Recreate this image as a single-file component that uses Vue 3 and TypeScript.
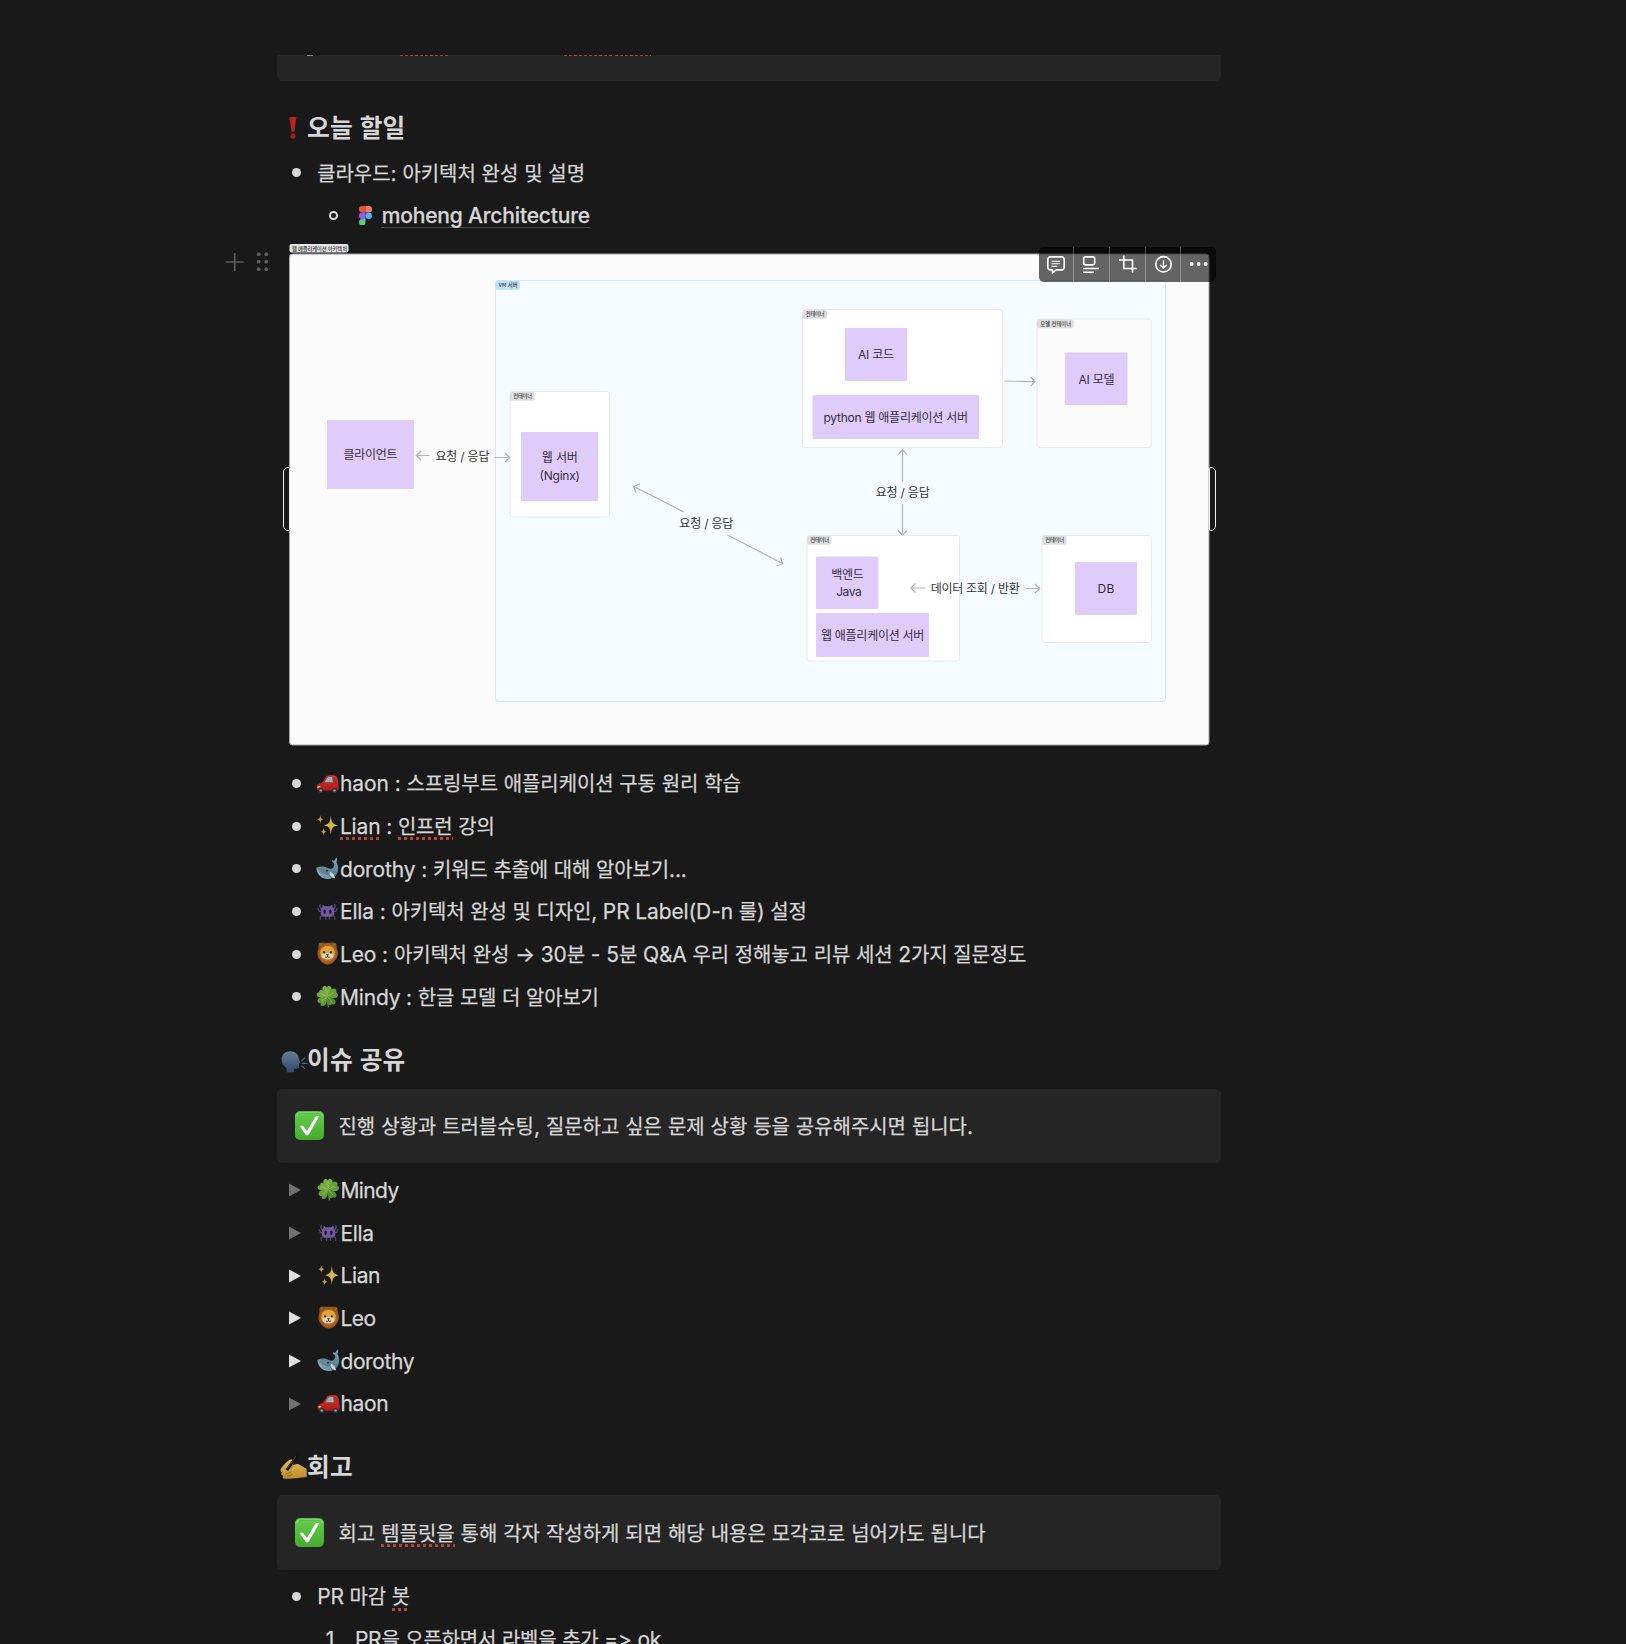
<script setup lang="ts">
import type { Directive } from 'vue'

interface Seg { t: string; k: boolean }
interface Part { t: string; bad?: boolean }
interface Line { icon: string; w: number; parts: Part[] }
interface Toggle { icon: string; name: string; w: number; filled: boolean }
interface Box { x: number; y: number; w: number; h: number }
interface Frame extends Box { label: string; tw: number; fill: string; stroke: string; tag: string }
interface Label { x: number; y: number; w: number; t: string }

// Splits a string in Hangul and Latin runs, which are set in different faces
function segs(text: string): Seg[] {
  return (text.match(/[\uAC00-\uD7A3]+|[^\uAC00-\uD7A3]+/g) ?? []).map(t => ({
    t,
    k: /[\uAC00-\uD7A3]/.test(t),
  }))
}

// Tracks a line of text so that it takes the given measure
const vFit: Directive<HTMLElement, number> = {
  mounted(el, { value }) {
    const natural = el.getBoundingClientRect().width
    const count = (el.textContent ?? '').length
    el.style.letterSpacing = `${(value - natural) / count}px`
  },
}

const todo: Line[] = [
  { icon: 'car', w: 401.5, parts: [{ t: 'haon : 스프링부트 애플리케이션 구동 원리 학습' }] },
  { icon: 'sparkles', w: 155.5, parts: [{ t: 'Lian', bad: true }, { t: ' : ' }, { t: '인프런', bad: true }, { t: ' 강의' }] },
  { icon: 'whale', w: 347.5, parts: [{ t: 'dorothy : 키워드 추출에 대해 알아보기...' }] },
  { icon: 'alien', w: 467.5, parts: [{ t: 'Ella : 아키텍처 완성 및 디자인, PR Label(D-n 룰) 설정' }] },
  { icon: 'lion', w: 687, parts: [{ t: 'Leo : 아키텍처 완성 → 30분 - 5분 Q&A 우리 정해놓고 리뷰 세션 2가지 질문정도' }] },
  { icon: 'clover', w: 259.5, parts: [{ t: 'Mindy : 한글 모델 더 알아보기' }] },
]

const toggles: Toggle[] = [
  { icon: 'clover', name: 'Mindy', w: 59, filled: false },
  { icon: 'alien', name: 'Ella', w: 34, filled: false },
  { icon: 'sparkles', name: 'Lian', w: 40.5, filled: true },
  { icon: 'lion', name: 'Leo', w: 36, filled: true },
  { icon: 'whale', name: 'dorothy', w: 74.5, filled: true },
  { icon: 'car', name: 'haon', w: 48.5, filled: false },
]

const frames: Frame[] = [
  { x: 495.5, y: 280.5, w: 670, h: 421, label: 'VM 서버', tw: 19, fill: '#f5fbff', stroke: '#d3e8f8', tag: '#bfdffa' },
  { x: 510, y: 391.5, w: 99.5, h: 125.5, label: '컨테이너', tw: 19, fill: '#ffffff', stroke: '#e9ebec', tag: '#dedede' },
  { x: 802.5, y: 309.5, w: 200, h: 138, label: '컨테이너', tw: 19, fill: '#ffffff', stroke: '#e9ebec', tag: '#dedede' },
  { x: 1037, y: 319, w: 114.3, h: 128.5, label: '모델 컨테이너', tw: 31, fill: '#fbfbfb', stroke: '#e9ebec', tag: '#dedede' },
  { x: 807, y: 535.5, w: 152.5, h: 125.5, label: '컨테이너', tw: 19, fill: '#ffffff', stroke: '#e9ebec', tag: '#dedede' },
  { x: 1042, y: 535.5, w: 109.3, h: 107, label: '컨테이너', tw: 19, fill: '#ffffff', stroke: '#e9ebec', tag: '#dedede' },
]

const nodes: Box[] = [
  { x: 327, y: 420, w: 87, h: 69 },
  { x: 521, y: 432, w: 77, h: 69 },
  { x: 845, y: 328, w: 62, h: 53 },
  { x: 812.5, y: 395, w: 166.5, h: 44 },
  { x: 1065, y: 352.5, w: 62.5, h: 52.5 },
  { x: 816, y: 556.5, w: 62.5, h: 52.5 },
  { x: 816, y: 613, w: 113, h: 44 },
  { x: 1075, y: 562, w: 62, h: 53 },
]

const labels: Label[] = [
  { x: 343.5, y: 458.8, w: 54, t: '클라이언트' },
  { x: 541.8, y: 461.8, w: 36, t: '웹 서버' },
  { x: 539.5, y: 480.2, w: 40.5, t: '(Nginx)' },
  { x: 858, y: 359.2, w: 36, t: 'AI 코드' },
  { x: 823.5, y: 421.5, w: 144.5, t: 'python 웹 애플리케이션 서버' },
  { x: 1078.5, y: 383.5, w: 36, t: 'AI 모델' },
  { x: 831.2, y: 578.5, w: 32.5, t: '백엔드' },
  { x: 836.2, y: 596.3, w: 25.5, t: 'Java' },
  { x: 821, y: 639.8, w: 103.3, t: '웹 애플리케이션 서버' },
  { x: 1097.5, y: 593.2, w: 16.8, t: 'DB' },
]

const links: Label[] = [
  { x: 435.5, y: 460.8, w: 54, t: '요청 / 응답' },
  { x: 679.3, y: 528, w: 54, t: '요청 / 응답' },
  { x: 875.7, y: 497.3, w: 54, t: '요청 / 응답' },
  { x: 930.7, y: 592.8, w: 89, t: '데이터 조회 / 반환' },
]
</script>

<template>
  <svg class="defs" aria-hidden="true">
    <defs>
      <linearGradient id="gRed" x1="0" y1="0" x2="0" y2="1"><stop offset="0" stop-color="#d9352c" /><stop offset="1" stop-color="#a81b17" /></linearGradient>
      <linearGradient id="gWhale" x1="0" y1="0" x2="0" y2="1"><stop offset="0" stop-color="#7fa6b8" /><stop offset="1" stop-color="#4d7386" /></linearGradient>
      <linearGradient id="gHead" x1="0" y1="0" x2="0" y2="1"><stop offset="0" stop-color="#647d98" /><stop offset="1" stop-color="#2f4a6c" /></linearGradient>
      <linearGradient id="gHand" x1="0" y1="0" x2="0" y2="1"><stop offset="0" stop-color="#e3bb5a" /><stop offset="1" stop-color="#bf8b2a" /></linearGradient>
      <linearGradient id="gCheck" x1="0" y1="0" x2="0" y2="1"><stop offset="0" stop-color="#46a63a" /><stop offset=".12" stop-color="#62cb4b" /><stop offset="1" stop-color="#46ab2c" /></linearGradient>
      <radialGradient id="gMane"><stop offset=".4" stop-color="#d08427" /><stop offset="1" stop-color="#944a14" /></radialGradient>
    </defs>
    <symbol id="car" viewBox="0 0 24 24">
      <path d="M.5 16c0-2.700 2-4 5.500-4.600L9.500 6.500C10.500 4.300 12 3.500 15 3.500h3c3 0 4.300 1.500 4.800 5l1 6c.3 3-.3 4.500-1.800 5H3c-1.500 0-2.500-1-2.500-3.500z" fill="url(#gRed)" />
      <path d="M9 10.700l2.500-4.200c.6-.9 1.500-1.300 3-1.300h2.300l.7 5.500z" fill="#87b8c4" /><path d="M18.600 5.300c1.200.3 1.800 1.500 2.400 5.200h-1.900z" fill="#a42a24" />
      <path d="M1.500 15.200l2.800-.8.300 1.300-2.900 1z" fill="#f2d9a0" />
      <circle cx="5" cy="19.300" r="2.700" fill="#2b2d30" /><circle cx="5" cy="19.300" r="1.400" fill="#8e969c" />
      <circle cx="19.300" cy="19.300" r="2.700" fill="#2b2d30" /><circle cx="19.300" cy="19.300" r="1.400" fill="#8e969c" />
    </symbol>
    <symbol id="sparkles" viewBox="0 0 24 24">
      <path d="M15.500 1.500c.5 6.700 1.600 9.300 7.500 10.200-5.900.9-7 3.600-7.500 10.300-.5-6.700-1.600-9.400-7.500-10.300C13.900 10.800 15 8.200 15.500 1.500z" fill="#d5b54d" />
      <path d="M4.500 1c.3 2.900.9 3.900 3.300 4.400-2.400.5-3 1.500-3.300 4.400C4.200 6.900 3.600 5.900 1.200 5.400 3.600 4.900 4.200 3.900 4.500 1zM8 14.500c.3 2.500.8 3.400 3 3.900-2.200.5-2.700 1.500-3 4-.3-2.500-.8-3.500-3-4 2.200-.5 2.700-1.400 3-3.900z" fill="#c39a44" />
    </symbol>
    <symbol id="whale" viewBox="0 0 24 24">
      <path d="M.5 11.200c4-2 8.500-1.700 12 .3 2.800 1.500 5.300.6 6.500-2.500.3-1.200.1-2-1-3-1.200-1-1.600-2-1.200-2.500C18 4 19 4 19.700 3.200 20.600 2 20.500.7 22 .5c.2 2-.3 3.800-.7 5 1.800 3 2.700 6.500 1.200 10.500-1.500 4.500-5.300 7-10.500 7C5.500 23 1 18.500.5 11.200z" fill="url(#gWhale)" />
      <path d="M.5 11.600c3.500 4.500 7.200 6.500 12.500 7.300l2.600 3.400c-6.800 2-14-1.800-15.100-10.700z" fill="#8fa9b5" />
      <path d="M3 15c3 3 6 4.500 10.500 5.300M5.500 18.800c2 1.500 4.500 2.400 8 2.700" fill="none" stroke="#62808e" stroke-width=".7" />
      <path d="M15 15.500c2.500 1.500 4.500 4 5 7-2.700-.5-5-2.300-6-5z" fill="#c6d2d7" /><circle cx="11.500" cy="14.200" r="1" fill="#17242b" />
    </symbol>
    <symbol id="alien" viewBox="0 0 24 24">
      <path d="M5.800 12H3.500L1.800 8.500M5.800 9.500L3.800 7l.8-3M18.200 12h2.300l1.700-3.500M18.200 9.500l2-2.500-.8-3M7 16l-2.500 1.500v3M17 16l2.500 1.500v3M10 17v3.500M14 17v3.500" fill="none" stroke="#5b4479" stroke-width="1.300" />
      <path d="M7.500 5l1.500 1.500h6L16.500 5l.8.800v1.500l1.700 2.200v5.500l-2.500 2.500h-9L5 15V9.500l1.700-2.200V5.800z" fill="#7459a0" />
      <ellipse cx="9" cy="12.200" rx="1.300" ry="2.300" fill="#1d1328" /><ellipse cx="15" cy="12.200" rx="1.300" ry="2.300" fill="#1d1328" />
    </symbol>
    <symbol id="lion" viewBox="0 0 24 24">
      <path d="M3 1.500C5 .5 6.500.3 8.500.7h7c2-.4 4-.2 5.500.8 1 2.500.5 4.500 1.200 6.500 1.600 3.500.8 8-2.200 10.700-1.500 2.500-4 4.600-8 4.900-4-.3-6.300-2.500-8-5.100C1.500 16 .7 11.500 2.300 8 3 6 2 4 3 1.500z" fill="url(#gMane)" />
      <circle cx="4.700" cy="2.900" r="1.500" fill="#6d7c26" /><circle cx="19.300" cy="2.900" r="1.500" fill="#6d7c26" />
      <path d="M12 4.300c4.500 0 7.500 3.100 7.500 6.700 0 5-3 7.300-7.500 7.300S4.500 16 4.500 11c0-3.600 3-6.700 7.500-6.700z" fill="#dda63d" />
      <path d="M12 11.500c4 0 6.300 1 6.300 2.800 0 2.200-3 3.700-6.300 3.700s-6.300-1.500-6.300-3.700c0-1.800 2.300-2.800 6.300-2.800z" fill="#ddd2ba" />
      <circle cx="8.500" cy="10.800" r="1.200" fill="#281a0e" /><circle cx="15.500" cy="10.800" r="1.200" fill="#281a0e" />
      <path d="M10.400 12.700h3.200L12 14.500z" fill="#281a0e" /><path d="M9.500 15.800c1.200.7 2.500.3 2.500-1.300 0 1.600 1.300 2 2.500 1.300" fill="none" stroke="#281a0e" stroke-width=".8" />
    </symbol>
    <symbol id="clover" viewBox="0 0 24 24">
      <path d="M11.800 12c-.2 4 .3 7.500 1.300 11.300" fill="none" stroke="#528d2b" stroke-width="1.500" />
      <path d="M11.700 11.500C8 9 6 5.500 6.800 2.800 7.500.5 10 .5 11.300 2.300 12.500.3 15.300.6 16 2.600c.8 2.900-1.200 6.400-4.300 8.900z" fill="#77ad42" />
      <path d="M12 11.700c1.200-4.700 4-8.200 7-8 2.500.5 3 2.500 2 4.300 2.500.8 2.700 3.700.5 5-2.800 1.400-6.500.7-9.500-1.300z" fill="#679f36" />
      <path d="M12 12c4.800.8 8.500 3.300 8.500 6-.2 2.500-2.700 3-4 2-1 1.800-3.500 1.500-4-.8-.8-2.700-1-5-.5-7.200z" fill="#548f2d" />
      <path d="M11.700 12.200c0 4.800-1.500 9.500-4.500 9.800-2 .1-2.900-1.500-2.200-3.500C2.700 19.300.9 17.300 1.800 15.300c1.500-2.800 5.900-3.400 9.900-3.100z" fill="#669f37" />
      <path d="M11.500 11.700C7.500 13.600 3 13.500 1.200 11.300 0 9.300 1.300 7.500 3.300 7.600 3 5.500 4.700 4.300 6.500 5.300c2.500 1.500 4.200 4 5 6.400z" fill="#75aa43" />
      <path d="M11.800 11.800L11.300 4.500M12 11.800l6-3.500M12 12l4.300 5.500M11.600 12l-6 5M11.600 11.800L4.500 9" stroke="#a4ce68" stroke-width=".6" />
    </symbol>
    <symbol id="talk" viewBox="0 0 28 24">
      <path d="M10 1c5.500 0 9 3.500 9.300 8 0 1.500 1.800 3.300 1.500 4.200-.2.700-1.500.6-1.500 1.100.3 1.700.3 4.500-1.300 5.200-1.700.5-3.500-.1-4 1V23.500H6v-4.500C2.500 16.500.5 13.500.5 10 .5 4.500 4.500 1 10 1z" fill="url(#gHead)" />
      <path d="M22 11.500l4-3.500M22.500 14H28M22 16.500l4 3.500" stroke="#4c6c87" stroke-width="1.200" />
    </symbol>
    <symbol id="write" viewBox="0 0 27 26">
      <path d="M1 14.500C3 11.500 6 8 9.500 6c2-1 4.300-.8 4.500 1l-1.300 4.500 1.500-.7c2.500-1.300 5-.8 7 .9l5.500 3.300v8L21 23.500c-5 1-11.500 1.500-17.500.9-1.800-.4-1.300-1.900-.3-2.300L1.700 21c-.8-1-.4-2 .3-2.500C.5 17.500 0 16 1 14.500z" fill="url(#gHand)" />
      <path d="M13.200 11.200c-1.200 1.800-3 3.200-5.200 4.200M5 20.200l6.500-2.400M6.500 22.700l6-2.200" fill="none" stroke="#8f6315" stroke-width=".8" />
      <path d="M0 25l1.500-4 2 1.400L.8 25.400z" fill="#0b0b0b" />
      <path d="M5.500 15.500L16 .8c.6-.7 1.300-.6 1.800-.1.500.4.500 1 .1 1.700L8.200 17z" fill="#101010" /><path d="M16.300 1.700l-9 12.600" stroke="#656565" stroke-width=".7" />
    </symbol>
    <symbol id="check" viewBox="0 0 29 29">
      <rect width="29" height="29" rx="5" fill="url(#gCheck)" /><path d="M2 5Q2 1.200 6 1.200h17Q27 1.200 27 5" fill="none" stroke="#9ae08a" stroke-width=".8" />
      <path d="M5 15.500c1-1.200 2.700-1.300 3.700.2l3.300 4L20 6.400c1-1.500 3.300-1.600 4-.9L14 23.300c-1 1.500-2.700 1.500-3.700 0z" fill="#fff" />
    </symbol>
  </svg>

  <main class="page">
    <section class="doc">
      <div class="cut">
        <i class="cut-icon" /><i class="dash a" /><i class="dash b" />
      </div>

      <h2 class="heading first">
        <svg class="bang" viewBox="0 0 8 22"><path d="M.3 0h7.100L5.600 14.500H2.500z" fill="#b5261c" /><circle cx="4" cy="19" r="2.600" fill="#a81e17" /></svg>
        <span v-fit="98.500" class="txt"><span v-for="(s, i) in segs('오늘 할일')" :key="i" :class="{ ko: s.k }">{{ s.t }}</span></span>
      </h2>

      <div class="row">
        <i class="bullet" />
        <span v-fit="268.500" class="txt"><span v-for="(s, i) in segs('클라우드: 아키텍처 완성 및 설명')" :key="i" :class="{ ko: s.k }">{{ s.t }}</span></span>
      </div>
      <div class="row nested">
        <i class="ring" />
        <svg class="figma" viewBox="0 0 13 19.500">
          <path d="M3.250 0H6.500v6.500H3.250a3.250 3.250 0 010-6.500z" fill="#e8562f" /><path d="M6.500 0h3.250a3.250 3.250 0 010 6.500H6.500z" fill="#f27868" />
          <path d="M3.250 6.500H6.500V13H3.250a3.250 3.250 0 010-6.500z" fill="#9c5af2" /><circle cx="9.750" cy="9.750" r="3.250" fill="#4cb3f5" />
          <path d="M3.250 13H6.500v3.250A3.250 3.250 0 113.250 13z" fill="#5bcb83" />
        </svg>
        <a class="link"><span v-fit="209" class="txt">moheng Architecture</span></a>
      </div>

      <figure class="figure">
        <div class="gutter">
          <svg width="44" height="20" viewBox="0 0 44 20">
            <path d="M9.700 1v18M.700 10h18" stroke="#5b5b5b" stroke-width="1.700" />
            <g fill="#5f5f5f"><circle cx="33.700" cy="2.200" r="1.900" /><circle cx="41.200" cy="2.200" r="1.900" /><circle cx="33.700" cy="9.700" r="1.900" /><circle cx="41.200" cy="9.700" r="1.900" /><circle cx="33.700" cy="17.200" r="1.900" /><circle cx="41.200" cy="17.200" r="1.900" /></g>
          </svg>
        </div>
        <svg class="diagram" width="921" height="503" viewBox="289 243 921 503">
          <rect x="289.500" y="254" width="919.500" height="491" rx="3" fill="#fbfbfb" stroke="#a3a3a3" />
          <rect x="289.500" y="244" width="59" height="8.500" rx="2" fill="#e4e4e4" />
          <text x="292" y="250.500" textLength="55" class="tag">웹 애플리케이션 아키텍처</text>
          <g v-for="(f, i) in frames" :key="i">
            <rect :x="f.x" :y="f.y" :width="f.w" :height="f.h" rx="3" :fill="f.fill" :stroke="f.stroke" />
            <rect :x="f.x" :y="f.y + 0.3" :width="f.tw + 5.500" height="9" rx="2" :fill="f.tag" />
            <text :x="f.x + 3.200" :y="f.y + 6.800" :textLength="f.tw" class="tag">{{ f.label }}</text>
          </g>
          <rect v-for="(n, i) in nodes" :key="i" :x="n.x" :y="n.y" :width="n.w" :height="n.h" rx="1.200" fill="#e0ccfb" />
          <g class="arrows">
            <path d="M429.500 455.500H416.500M421 451l-4.700 4.500 4.700 4.500M495 457.500h14.500M505 453l4.700 4.500-4.700 4.500" />
            <path d="M684 512l-50-25.500M640 484l-6.300 2.300 2 6.300M727.500 535l55 28.500M780.500 557.500l2.200 6.200-6.200 2" />
            <path d="M1004.500 381l30 .6M1030.500 377l4.500 4.600-4.500 4.600" />
            <path d="M902.500 481.500v-31.500M898 454.500l4.500-4.700 4.500 4.700M902.500 504v31M898 530.500l4.500 4.700 4.500-4.700" />
            <path d="M925 588h-14M915.500 583.500l-4.700 4.500 4.700 4.500M1025.500 588.500h14M1035 584l4.700 4.500-4.700 4.500" />
          </g>
          <text v-for="(l, i) in labels" :key="'n' + i" :x="l.x" :y="l.y" :textLength="l.w" class="label">{{ l.t }}</text>
          <text v-for="(l, i) in links" :key="'l' + i" :x="l.x" :y="l.y" :textLength="l.w" class="label link-label">{{ l.t }}</text>
        </svg>
        <i class="handle left" /><i class="handle right" />
        <div class="tools">
          <svg width="177" height="35" viewBox="0 0 177 35" fill="none" stroke="#fff" stroke-width="1.600" stroke-linejoin="round">
            <path d="M34.500 0v35M70.500 0v35M106.500 0v35M141.500 0v35" stroke="rgba(255,255,255,.28)" stroke-width="1" />
            <path d="M11.800 9.900h10.400a3 3 0 013 3v7a3 3 0 01-3 3h-4.900l-3.800 3v-3h-1.700a3 3 0 01-3-3v-7a3 3 0 013-3z" />
            <path d="M12.500 14.300h8.500M12.500 16.800h8.500M12.500 19.200h5.500" stroke-width="1.100" />
            <rect x="44.700" y="9.900" width="11" height="8" rx="1.800" /><path d="M44 21.500h16M44 25.300h11" />
            <path d="M84.800 8.500v13h12.700M80 13h13.500v12.700" stroke-linejoin="miter" />
            <circle cx="124.500" cy="17.300" r="7.700" /><path d="M124.500 13.200v8M121.300 18.100l3.200 3.200 3.200-3.200" stroke-width="1.400" />
            <g fill="#fff" stroke="none"><circle cx="152.600" cy="17" r="1.900" /><circle cx="159.600" cy="17" r="1.900" /><circle cx="166.600" cy="17" r="1.900" /></g>
          </svg>
        </div>
      </figure>

      <div v-for="line in todo" :key="line.icon" class="row">
        <i class="bullet" />
        <svg class="emoji"><use :href="'#' + line.icon" /></svg>
        <span v-fit="line.w" class="txt">
          <span v-for="(p, i) in line.parts" :key="i" :class="{ bad: p.bad }"><span v-for="(s, j) in segs(p.t)" :key="j" :class="{ ko: s.k }">{{ s.t }}</span></span>
        </span>
      </div>

      <h2 class="heading second">
        <svg class="head-emoji"><use href="#talk" /></svg>
        <span v-fit="98.500" class="txt"><span v-for="(s, i) in segs('이슈 공유')" :key="i" :class="{ ko: s.k }">{{ s.t }}</span></span>
      </h2>
      <div class="callout">
        <svg class="check"><use href="#check" /></svg>
        <span v-fit="634.500" class="txt"><span v-for="(s, i) in segs('진행 상황과 트러블슈팅, 질문하고 싶은 문제 상황 등을 공유해주시면 됩니다.')" :key="i" :class="{ ko: s.k }">{{ s.t }}</span></span>
      </div>

      <div class="toggles">
        <div v-for="t in toggles" :key="t.name" class="row">
          <svg class="tri" viewBox="0 0 12 14"><path d="M0 .4v13.200L12 7z" :fill="t.filled ? '#e0e0e0' : '#717171'" /></svg>
          <svg class="emoji"><use :href="'#' + t.icon" /></svg>
          <span v-fit="t.w" class="txt">{{ t.name }}</span>
        </div>
      </div>

      <h2 class="heading third">
        <svg class="head-emoji write"><use href="#write" /></svg>
        <span v-fit="46" class="txt"><span class="ko">회고</span></span>
      </h2>
      <div class="callout tall">
        <svg class="check"><use href="#check" /></svg>
        <span v-fit="647" class="txt"><span class="ko">회고</span> <span class="bad"><span class="ko">템플릿을</span></span><span v-for="(s, i) in segs(' 통해 각자 작성하게 되면 해당 내용은 모각코로 넘어가도 됩니다')" :key="i" :class="{ ko: s.k }">{{ s.t }}</span></span>
      </div>
      <div class="row last">
        <i class="bullet" />
        <span v-fit="93.500" class="txt">PR <span class="ko">마감</span> <span class="bad"><span class="ko">봇</span></span></span>
      </div>
      <div class="row numbered">
        <span class="num">1.</span>
        <span v-fit="307" class="txt"><span v-for="(s, i) in segs('PR을 오픈하면서 라벨을 추가 => ok')" :key="i" :class="{ ko: s.k }">{{ s.t }}</span></span>
      </div>
    </section>
  </main>
</template>

<style>
body {
  background: #191919;
}
</style>

<style scoped>
.defs {
  position: absolute;
  width: 0;
  height: 0;
}
.page {
  box-sizing: border-box;
  width: 1626px;
  height: 1644px;
  padding: 55px 0 0 277px;
  overflow: hidden;
  background: #191919;
  color: #d6d6d6;
  font-family: Inter, "Noto Sans CJK KR", sans-serif;
  font-size: 21px;
}
.doc {
  display: flex;
  flex-direction: column;
  width: 944px;
}
.cut {
  position: relative;
  height: 26px;
  flex: none;
  background: #252525;
  border-radius: 0 0 5px 5px;
}
.cut-icon {
  position: absolute;
  left: 30px;
  top: 0;
  width: 6px;
  height: 1px;
  background: #888;
}
.dash {
  position: absolute;
  top: 0;
  height: 1px;
  background: repeating-linear-gradient(90deg, #a5423b 0 3px, transparent 3px 5.050px);
}
.dash.a { left: 123px; width: 50px; }
.dash.b { left: 287px; width: 87px; }

.txt {
  white-space: nowrap;
  display: inline-block;
}
.row .txt,
.callout .txt,
.num {
  padding: 2px 0 0 0.700px;
  -webkit-text-stroke: 0.250px #d6d6d6;
}
.row .link .txt {
  padding-top: 0;
}
.ko {
  font-family: "Noto Sans CJK KR", sans-serif;
  font-size: 0.95em;
  line-height: 1;
}
.heading {
  display: flex;
  align-items: center;
  flex: none;
  height: 42px;
  margin: 0;
  padding-left: 4px;
  font-size: 26px;
  font-weight: 600;
  line-height: 42px;
}
.first { margin-top: 26px; }
.second { margin-top: 20.500px; }
.third { margin-top: 20.600px; }
.bang {
  width: 8px;
  height: 22px;
  margin: 0 10px 0 8px;
}
.head-emoji {
  width: 26px;
  height: 23px;
  flex: none;
  margin: 4px 0 0 0;
}
.head-emoji.write {
  width: 27px;
  height: 26px;
  margin: 0 0 0 -1px;
}
.row {
  display: flex;
  align-items: center;
  flex: none;
  height: 42.700px;
  line-height: 42.700px;
  padding-left: 14.500px;
}
.first + .row { margin-top: 2.600px; }
.bullet {
  width: 9px;
  height: 9px;
  flex: none;
  margin-right: 16px;
  border-radius: 50%;
  background: #d8d8d8;
}
.nested { padding-left: 52px; }
.ring {
  box-sizing: border-box;
  width: 8.500px;
  height: 8.500px;
  border: 2px solid #d8d8d8;
  border-radius: 50%;
}
.figma {
  width: 13px;
  height: 19.500px;
  margin: 0 9.500px 0 21px;
}
.link {
  font-weight: 500;
  line-height: 23px;
  height: 23px;
  border-bottom: 1px solid #484848;
}
.emoji {
  width: 23px;
  height: 23px;
  flex: none;
  margin: -1px 0 0 -0.300px;
}
.bad {
  position: relative;
}
.bad::after {
  content: "";
  position: absolute;
  left: 0;
  right: 0;
  bottom: -1.500px;
  height: 3px;
  background: repeating-linear-gradient(90deg, #b7433a 0 3px, transparent 3px 6px);
}

.figure {
  position: relative;
  flex: none;
  width: 921px;
  height: 503px;
  margin: 6px 0 16.200px 12px;
}
.diagram {
  display: block;
}
.gutter {
  position: absolute;
  left: -64px;
  top: 9px;
}
.tag {
  font-family: "Noto Sans CJK KR", sans-serif;
  font-size: 5.300px;
  font-weight: 500;
  fill: #3c3c3c;
}
.label {
  font-family: Inter, "Noto Sans CJK KR", sans-serif;
  font-size: 12px;
  fill: #362d42;
}
.link-label {
  fill: #333638;
}
.arrows {
  fill: none;
  stroke: #b1b3b4;
  stroke-width: 1.200;
}
.handle {
  position: absolute;
  box-sizing: border-box;
  top: 224px;
  width: 7px;
  height: 64px;
  border: 1px solid #f0f0f0;
  background: #191919;
}
.handle.left {
  left: -6px;
  border-radius: 5px 2px 2px 5px;
}
.handle.right {
  right: -6px;
  border-radius: 2px 5px 5px 2px;
}
.tools {
  position: absolute;
  left: 750px;
  top: 4px;
  width: 177px;
  height: 35px;
  border-radius: 5px;
  background: rgba(0, 0, 0, 0.6);
}
.tools svg {
  display: block;
}

.callout {
  display: flex;
  align-items: center;
  flex: none;
  box-sizing: border-box;
  height: 74px;
  margin-top: 8px;
  padding-left: 18px;
  border-radius: 5px;
  background: #252525;
}
.callout.tall {
  height: 75px;
  margin-top: 7px;
}
.callout .txt {
  padding-left: 0;
}
.check {
  width: 29px;
  height: 29px;
  margin-right: 14.500px;
}
.toggles {
  margin-top: 6.200px;
}
.toggles .row {
  padding-left: 11.500px;
}
.tri {
  width: 12px;
  height: 14px;
  flex: none;
  margin-right: 16.500px;
}
.last { margin-top: 5.600px; }
.numbered { padding-left: 48px; }
.num {
  width: 28.500px;
}
</style>
